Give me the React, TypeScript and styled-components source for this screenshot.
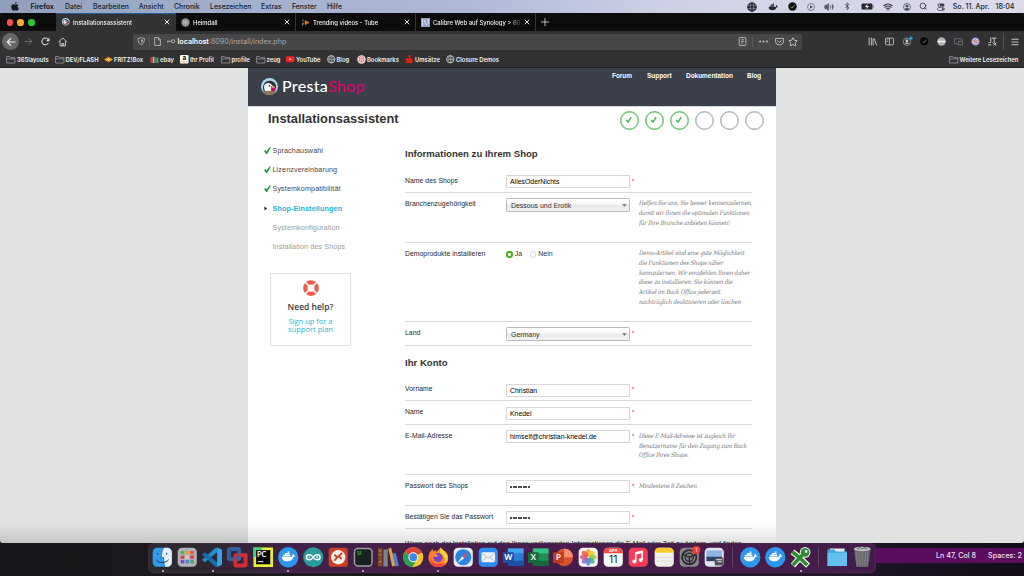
import React from "react";
import styled, { createGlobalStyle } from "styled-components";
import { Search, Wifi, Bluetooth, Star, Volume2 } from "lucide-react";

const Global = createGlobalStyle`
  * { box-sizing: border-box; }
  body { margin: 0; overflow: hidden; background: #151318; }
  svg { display: block; flex: none; overflow: visible; }
`;

const ui = `Inter, "Liberation Sans", sans-serif`;
const body = `"Liberation Sans", Arial, sans-serif`;

const Desktop = styled.div`
  width: 1024px;
  height: 576px;
  display: flex;
  flex-direction: column;
  overflow: hidden;
  font-family: ${ui};
  background: linear-gradient(100deg, #19171b 0%, #1d1b1e 60%, #23182a 80%, #120d18 100%);
`;

const MenuBar = styled.div`
  height: 13px;
  flex: none;
  display: flex;
  align-items: center;
  padding-left: 11px;
  background: linear-gradient(90deg, #919fbd 0%, #a3b0ce 25%, #adb9d6 45%, #c9cde4 62%, #d4d4e8 72%, #dadaeb 100%);
  color: #1b1d25;
`;
const Word = styled.span<{ $w?: number; $size?: number; $bold?: boolean }>`
  width: ${(p) => (p.$w ? `${p.$w}px` : "auto")};
  flex: none;
  white-space: nowrap;
  font-size: ${(p) => p.$size ?? 6.9}px;
  font-weight: ${(p) => (p.$bold ? 700 : 450)};
`;
const Cell = styled.span<{ $w: number }>`
  width: ${(p) => p.$w}px;
  flex: none;
  display: flex;
  align-items: center;
  justify-content: center;
`;
const Grow = styled.span`
  flex: 1;
`;

const Window = styled.div`
  height: 530px;
  flex: none;
  display: flex;
  flex-direction: column;
  border-radius: 4px 4px 3px 3px;
  overflow: hidden;
  background: #323234;
  color: #f2f2f3;
`;
const TabStrip = styled.div`
  height: 18px;
  flex: none;
  display: flex;
  background: #0c0c0d;
`;
const Lights = styled.div`
  width: 56px;
  display: flex;
  align-items: center;
  gap: 4px;
  padding: 1px 0 0 6.7px;
`;
const Light = styled.span<{ $c: string }>`
  width: 6.7px;
  height: 6.7px;
  border-radius: 50%;
  background: ${(p) => p.$c};
`;
const Tab = styled.div<{ $active?: boolean }>`
  width: 120px;
  display: flex;
  align-items: center;
  padding-left: 5px;
  padding-bottom: 1px;
  background: ${(p) => (p.$active ? "#323234" : "#0c0c0d")};
  border-top: 1.5px solid ${(p) => (p.$active ? "#1f5f9e" : "#0c0c0d")};
  border-right: 1px solid ${(p) => (p.$active ? "#323234" : "#343436")};
`;
const TabTitle = styled.span`
  width: 91px;
  flex: none;
  margin-left: 3px;
  overflow: hidden;
  white-space: nowrap;
  font-size: 5.9px;
  font-weight: 500;
  mask-image: linear-gradient(90deg, #000 76px, transparent 90px);
`;

const NavBar = styled.div`
  height: 21px;
  flex: none;
  display: flex;
  align-items: center;
  padding-left: 2px;
`;
const Back = styled.span`
  width: 17px;
  height: 17px;
  border-radius: 50%;
  background: #67676a;
  display: flex;
  align-items: center;
  justify-content: center;
`;
const UrlBar = styled.div`
  width: 669px;
  height: 16px;
  margin-left: 62px;
  border-radius: 2px;
  background: #474749;
  display: flex;
  align-items: center;
`;
const Url = styled.span`
  font-size: 7.1px;
  color: #a9a9ac;
  white-space: nowrap;
  b {
    color: #fff;
    font-weight: 600;
  }
`;
const NavIcons = styled.span`
  display: flex;
  align-items: center;
`;
const Divider = styled.span<{ $h: number; $c: string }>`
  width: 1px;
  height: ${(p) => p.$h}px;
  background: ${(p) => p.$c};
`;
const Bookmarks = styled.div`
  height: 16px;
  flex: none;
  display: flex;
  align-items: center;
  padding-left: 6px;
  border-bottom: 1px solid #1d1d1f;
`;
const Bookmark = styled.span<{ $w: number }>`
  width: ${(p) => p.$w}px;
  flex: none;
  display: flex;
  align-items: center;
  white-space: nowrap;
  font-size: 5.85px;
  font-weight: 600;
  gap: 1.5px;
`;

const Viewport = styled.div`
  flex: 1;
  display: flex;
  justify-content: center;
  background: #e0e3e2;
  overflow: hidden;
`;
const Page = styled.div`
  width: 528px;
  background: #fff;
  font-family: ${body};
  color: #333;
`;
const Header = styled.div`
  height: 38.5px;
  background: #3a3f4a;
  border-bottom: 1px solid #d3d5da;
  display: flex;
  justify-content: space-between;
  padding-left: 13px;
`;
const Brand = styled.div`
  display: flex;
  align-items: center;
  gap: 4px;
  font: 500 16px Lato, sans-serif;
  letter-spacing: 0.3px;
  color: #fff;
  padding-bottom: 1px;
  b {
    font-weight: 500;
    color: #df0067;
  }
`;
const BrandName = styled.span`
  padding-bottom: 2px;
`;
const HeaderNav = styled.div`
  display: flex;
  height: 15px;
  align-items: center;
  font-size: 6.45px;
  font-weight: 700;
  color: #fff;
`;
const NavLink = styled.span<{ $w: number }>`
  width: ${(p) => p.$w}px;
  white-space: nowrap;
`;
const TitleRow = styled.div`
  height: 32px;
  display: flex;
  justify-content: space-between;
  padding: 0 12.5px 0 20px;
`;
const Title = styled.h1`
  margin: 4px 0 0;
  font-size: 12.85px;
  line-height: 15px;
  color: #333;
`;
const Steps = styled.div`
  display: flex;
  gap: 6px;
  padding-top: 4px;
`;
const Step = styled.span<{ $done?: boolean }>`
  width: 19px;
  height: 19px;
  border-radius: 50%;
  border: 1.6px solid ${(p) => (p.$done ? "#5bc063" : "#a9afb8")};
  box-shadow: inset 0 0 0 0.5px ${(p) => (p.$done ? "#5bc063" : "#a9afb8")};
  display: flex;
  align-items: center;
  justify-content: center;
`;
const Columns = styled.div`
  display: flex;
`;
const Sidebar = styled.div`
  width: 157px;
  padding: 2.5px 0 0 16px;
`;
const SideItem = styled.div<{ $state: "done" | "current" | "todo" }>`
  height: 19.2px;
  display: flex;
  align-items: center;
  font-size: 7.2px;
  letter-spacing: ${(p) => (p.$state === "current" ? 0.12 : 0.11)}px;
  white-space: nowrap;
  font-weight: ${(p) => (p.$state === "current" ? 700 : 400)};
  color: ${(p) => ({ done: "#484848", current: "#1fb0d6", todo: "#9b9b9b" })[p.$state]};
`;
const SideMark = styled.span`
  width: 8.5px;
  flex: none;
`;
const Help = styled.div`
  width: 81px;
  height: 73px;
  margin: 16.5px 0 0 6px;
  border: 1px solid #dfe0e2;
  display: flex;
  flex-direction: column;
  align-items: center;
  padding-top: 6.5px;
  font-family: "Open Sans", sans-serif;
`;
const HelpTitle = styled.div`
  margin-top: 4.5px;
  font-size: 8.5px;
  line-height: 12px;
  font-weight: 600;
  color: #363a41;
`;
const HelpLink = styled.div`
  margin-top: 4px;
  font-size: 7.5px;
  line-height: 8.6px;
  text-align: center;
  color: #25b9d7;
`;
const Form = styled.div`
  width: 347px;
`;
const Section = styled.h2<{ $h: number; $top: number }>`
  margin: 0;
  height: ${(p) => p.$h}px;
  padding-top: ${(p) => p.$top}px;
  font-size: 9.6px;
  line-height: 11px;
  color: #333;
`;
const Row = styled.div<{ $h: number }>`
  height: ${(p) => p.$h}px;
  padding-top: 5.5px;
  border-bottom: 1px solid #dadada;
  display: grid;
  grid-template-columns: 101px 125px 8px 1fr;
  align-items: start;
`;
const Label = styled.label`
  padding-top: 1.5px;
  font-size: 6.8px;
  line-height: 8px;
  letter-spacing: 0.06px;
  white-space: nowrap;
  color: #262626;
`;
const Input = styled.div`
  width: 124px;
  height: 13px;
  border: 1px solid #d6d6d6;
  padding: 1px 0 0 3px;
  font-size: 6.9px;
  line-height: 10px;
  color: #000;
`;
const Select = styled.div`
  width: 124px;
  height: 14px;
  border: 1px solid #b9b9b9;
  border-radius: 1.5px;
  padding: 0 2.5px 0 4px;
  display: flex;
  align-items: center;
  justify-content: space-between;
  font-size: 6.95px;
  background: linear-gradient(#fff 20%, #f4f4f4 52%, #e9e9e9 54%, #f3f3f3);
`;
const Required = styled.span`
  padding: 1.5px 0 0 1px;
  font-size: 6px;
  line-height: 8px;
  color: #f00;
`;
const Hint = styled.p`
  margin: 0;
  padding-top: 0.4px;
  width: 116px;
  font: italic 6.2px "DejaVu Serif Condensed", "DejaVu Serif", "Liberation Serif", serif;
  line-height: 9.65px;
  letter-spacing: -0.23px;
  white-space: pre;
  color: #777;
`;
const Radios = styled.div`
  display: flex;
  align-items: center;
  padding-top: 1.5px;
  font-size: 7px;
  line-height: 8px;
`;
const Radio = styled.span<{ $on?: boolean }>`
  width: 6.6px;
  height: 6.6px;
  margin: 1.5px 2.2px 0 0;
  border-radius: 50%;
  border: ${(p) => (p.$on ? "2px solid #45ad16" : "1px solid #d5d5d5")};
  background: #fff;
`;
const Choice = styled.span`
  width: 23.5px;
  display: flex;
  align-items: center;
`;
const Dots = styled.span`
  display: flex;
  align-items: center;
  gap: 0.5px;
  height: 10px;
  i {
    width: 2px;
    height: 2px;
    border-radius: 50%;
    background: #111;
  }
`;
const Cut = styled.div`
  height: 20px;
  padding-top: 11.4px;
  font-size: 6.8px;
  line-height: 8px;
  white-space: nowrap;
  color: #222;
`;
const Fade = styled.div`
  height: 20px;
  margin-top: -20px;
  position: relative;
  flex: none;
  background: linear-gradient(rgba(0, 0, 0, 0), rgba(0, 0, 0, 0.12));
  width: 776px;
`;

const Bottom = styled.div`
  flex: 1;
  display: flex;
  align-items: flex-start;
`;
const Dock = styled.div`
  width: 728px;
  height: 30px;
  margin-left: 148px;
  flex: none;
  border-radius: 6px;
  background: linear-gradient(90deg, #2c2a2f 0%, #2f2732 9%, #432048 22%, #481c4c 60%, #431d49 100%);
  box-shadow: inset 0 0 0 0.5px #4a3450;
  display: flex;
  padding: 4px 0 0 2px;
`;
const DockItem = styled.span`
  width: 25.07px;
  flex: none;
  display: flex;
  flex-direction: column;
  align-items: center;
  gap: 2px;
`;
const Running = styled.i`
  width: 2px;
  height: 2px;
  border-radius: 50%;
  background: #d3c8d6;
`;
const DockRule = styled.span<{ $w: number }>`
  width: ${(p) => p.$w}px;
  height: 22px;
  display: flex;
  justify-content: center;
`;
const StatusBar = styled.div`
  flex: 1;
  height: 15px;
  margin-top: 4.5px;
  background: #590d5c;
  display: flex;
  align-items: center;
  padding-left: 60px;
  color: #ece0ee;
`;

const Svg = ({ s, v = 16, children }: { s: number; v?: number; children: React.ReactNode }) => (
  <svg width={s} height={s} viewBox={`0 0 ${v} ${v}`} fill="none">
    {children}
  </svg>
);

const Apple = () => (
  <svg width="8" height="9" viewBox="0 0 16 18" fill="#15171e">
    <path d="M11.3 0c.1 1.900-1.500 3.900-3.400 3.900C7.600 2.100 9.300.200 11.300 0zM14.800 6.200c-2.700 1.700-2.200 5.200.7 6.400-.8 2.300-2.300 4.900-4 4.900-1.300 0-1.700-.8-3.200-.8s-2 .8-3.200.8C2.800 17.500.5 13.500.5 10c0-3.500 2.200-5.300 4.300-5.300 1.400 0 2.500.9 3.400.9s2.200-1 3.900-1c.9 0 2 .5 2.700 1.600z" />
  </svg>
);
const Globe = ({ s = 9, c = "#ddd", solid = false }) => (
  <Svg s={s}>
    <circle cx="8" cy="8" r="7" stroke={c} strokeWidth="1.4" fill={solid ? c : "none"} />
    {solid ? (
      <path d="M1.500 5.500h13M1.500 10.500h13M5.500 2v12M10.500 2v12" stroke="#9c9cac" strokeWidth=".9" />
    ) : (
      <path d="M1 8h14M8 1v14M8 1C3 4 3 12 8 15M8 1c5 3 5 11 0 14" stroke={c} strokeWidth="1" />
    )}
  </Svg>
);
const Whale = ({ s, c }: { s: number; c: string }) => (
  <Svg s={s}>
    <path d="M1 8h11c.8 0 1-1.200.6-2l1-1.200c.8.500 1 1.200.9 1.900.6-.1 1.100 0 1.500.4-.4 1-1.400 1.200-2.100 1.200-1 3.200-3.200 4.900-6.700 4.900C3.500 13.200 1 11.500 1 8z" fill={c} />
    <path d="M2.500 5.800h8v1.700h-8zM4.500 4h5v1.500h-5zM7.500 2.300h2v1.500h-2z" fill={c} />
  </Svg>
);
const CheckDisc = ({ s = 9, c = "#111" }) => (
  <Svg s={s}>
    <circle cx="8" cy="8" r="7.500" fill={c} />
    <path d="M4.500 8.500l2.500 2.500 5-6" stroke="#999" strokeWidth="1.500" />
  </Svg>
);
const User = ({ s = 8, c = "#444956" }) => (
  <Svg s={s}>
    <circle cx="8" cy="8" r="7" stroke={c} strokeWidth="1.500" />
    <circle cx="8" cy="6.300" r="2.700" fill={c} />
    <path d="M3.500 12.500c1.500-3.500 7.500-3.500 9 0-2 2.300-7 2.300-9 0z" fill={c} />
  </Svg>
);
const Battery = () => (
  <svg width="13" height="7" viewBox="0 0 26 14">
    <rect x="1" y="1" width="22" height="12" rx="2.500" fill="#25262e" />
    <path d="M24.500 5v4" stroke="#555" strokeWidth="1.500" />
    <path d="M13 1.500L7.500 8h4l-1 4.500L16.500 6h-4z" fill="#d8d8e8" />
  </svg>
);
const Toggles = () => (
  <Svg s={8}>
    <rect x="1" y="1" width="14" height="6" rx="3" fill="#3b3d48" />
    <circle cx="4.500" cy="4" r="1.700" fill="#d8d8e8" />
    <rect x="1" y="9" width="14" height="6" rx="3" stroke="#3b3d48" strokeWidth="1.300" />
    <circle cx="11.500" cy="12" r="2" fill="#3b3d48" />
  </Svg>
);
const Close = () => (
  <Svg s={6}>
    <path d="M2 2l12 12M14 2L2 14" stroke="#eee" strokeWidth="2.600" />
  </Svg>
);
const Folder = () => (
  <Svg s={9.5}>
    <path d="M1 13.500V2.500h5l1.500 2H15v9zM1 6.500h14" stroke="#a5a5a7" strokeWidth="1.200" />
  </Svg>
);
const Puffin = ({ s }: { s: number }) => (
  <Svg s={s} v={18}>
    <circle cx="9" cy="9" r="9" fill="#a4dbe8" />
    <path d="M2.500 13C1 8 4 3 9 3c4 0 7 2.500 7 7l-3 5H4z" fill="#2b3138" />
    <path d="M3.500 8C4.500 5.500 7.500 4.500 10 6c2.500 1.300 3 3.500 2 5.500l-2 3H5c-1.500-1.500-2-4-1.500-6.500z" fill="#fff" />
    <circle cx="9" cy="8.300" r="1" fill="#25313b" />
    <path d="M10.500 9c3-1.500 6 .5 4.500 5.500-1-1.500-3-1-4.500-2z" fill="#df0067" />
    <path d="M11 8.500c1.600-.5 3.200 0 3.800 1.500l-3.300.8z" fill="#d9a06c" />
    <path d="M2 14.500c3-1.500 11-1.500 14 0-3 4.500-11 4.500-14 0z" fill="#8d7358" />
  </Svg>
);
const GreenTick = () => (
  <svg width="7" height="7" viewBox="0 0 14 14">
    <path d="M.2 8L3 6l2 3L11.500.3l2.300.5L6.200 13.800H4.200z" fill="#149a35" />
  </svg>
);
const Lifebuoy = () => (
  <Svg s={16} v={32}>
    <circle cx="16" cy="16" r="11.500" stroke="#ee5b49" strokeWidth="8.500" />
    <path d="M5 5l6 6M21 21l6 6M27 5l-6 6M11 21l-6 6" stroke="#fff" strokeWidth="3.500" />
  </Svg>
);
const Arrow = () => (
  <svg width="5" height="3" viewBox="0 0 10 6">
    <path d="M0 0h10L5 6z" fill="#888" />
  </svg>
);

const Ic = ({ children }: { children: React.ReactNode }) => (
  <Svg s={20.5} v={21}>
    {children}
  </Svg>
);
const Sq = ({ f }: { f: string }) => <rect x=".7" y=".7" width="19.600" height="19.600" rx="4.500" fill={f} />;
const Office = ({ l, dark, mid, light, round = false }: { l: string; dark: string; mid: string; light: string; round?: boolean }) => (
  <Ic>
    {round ? (
      <>
        <circle cx="11.500" cy="10.500" r="9" fill={mid} />
        <path d="M11.500 1.500a9 9 0 0 1 9 9h-9z" fill={light} />
      </>
    ) : (
      <>
        <rect x="5" y="1.500" width="16" height="18" rx="1" fill={mid} />
        <path d="M5 1.500h16v5H5z" fill={light} />
        <path d="M5 14h16v5.500H5z" fill={dark} />
      </>
    )}
    <rect x="0" y="5.500" width="11" height="11" rx="1" fill={dark} />
    <text x="5.500" y="13.800" textAnchor="middle" fontSize="8" fontWeight="700" fontFamily="Lato, sans-serif" fill="#fff">{l}</text>
  </Ic>
);
const DockerDock = () => (
  <Ic>
    <circle cx="10.500" cy="10.500" r="10.400" fill="#2d96ee" />
    <g transform="translate(3 2.500) scale(.92)">
      <path d="M1 8h11c.8 0 1-1.200.6-2l1-1.200c.8.500 1 1.200.9 1.900.6-.1 1.100 0 1.500.4-.4 1-1.400 1.200-2.100 1.200-1 3.200-3.200 4.900-6.700 4.900C3.500 13.200 1 11.500 1 8zM2.500 5.800h8v1.700h-8zM4.500 4h5v1.500h-5zM7.500 2.300h2v1.500h-2z" fill="#fff" />
    </g>
  </Ic>
);

const petals = ["#f6a12d", "#e8d12f", "#9cc93f", "#41b58d", "#4d8fd0", "#8d6fc0", "#d25c92", "#ef5b45"];
const padColors = ["#4bbf4b", "#e9a41f", "#ee5540", "#d84343", "#cfcfcf", "#e03838", "#8a49c5", "#3f87e0", "#49b04b"];

const dockLeft: [React.ReactNode, boolean?][] = [
  [
    <Ic key="finder">
      <Sq f="#2f9bee" />
      <path d="M12 .7c-2 3-2.500 7-2.300 10h2.500c-.2 3.500 0 6 1 9.600h2.600a4.500 4.500 0 0 0 4.500-4.500V5.200A4.500 4.500 0 0 0 15.800.7z" fill="#e4eefa" />
      <path d="M6 6v2M15 6v2M4 13c3.500 4 9.500 4 13 0" stroke="#17385f" strokeWidth="1" />
      <path d="M12 .7c-2 3-2.500 7-2.300 10h2.500c-.2 3.500 0 6 1 9.600" stroke="#17385f" strokeWidth=".5" />
    </Ic>,
    true,
  ],
  [
    <Ic key="pad">
      <Sq f="#b3b1b8" />
      {padColors.map((c, i) => (
        <rect key={i} x={3.7 + (i % 3) * 4.9} y={4 + Math.floor(i / 3) * 4.700} width="3.800" height="3.400" rx=".8" fill={c} />
      ))}
    </Ic>,
  ],
  [
    <Ic key="code">
      <path d="M15.500 5.300L3 15.500l-3-2.300L13.500 1l2-.5z" fill="#2489ca" />
      <path d="M15.500 15.700L3 5.500.0 7.800 13.500 20l2 .5z" fill="#1070b3" />
      <path d="M15.500.5l5 2.300v15.400l-5 2.300z" fill="#3ba3ee" />
    </Ic>,
    true,
  ],
  [
    <Ic key="vm">
      <rect x="8.500" y="8.500" width="10.500" height="10.500" rx="1" stroke="#d42e34" strokeWidth="4" />
      <rect x="2" y="2" width="10.500" height="10.500" rx="1" stroke="#315f9f" strokeWidth="4" />
      <path d="M12 8.500h7v4M8.500 12v5" stroke="#d42e34" strokeWidth="3.500" />
    </Ic>,
  ],
  [
    <Ic key="pc">
      <rect x=".5" y=".5" width="20" height="20" fill="#e9ee3f" />
      <path d="M.5.500h10L.5 12z" fill="#37d487" />
      <rect x="3.200" y="3.200" width="14.500" height="14.500" fill="#060606" />
      <text x="4.200" y="10.500" fontSize="7.500" fontWeight="700" fontFamily="Lato, sans-serif" fill="#fff">PC</text>
      <path d="M5 15h5.500" stroke="#fff" strokeWidth="1" />
    </Ic>,
  ],
  [<DockerDock key="d" />, true],
  [
    <Ic key="ard">
      <circle cx="10.500" cy="10.500" r="10.300" fill="#2b9a9c" />
      <path d="M10.500 10.500c-2-3.500-7-3.500-7 0s5 3.500 7 0c2-3.500 7-3.500 7 0s-5 3.500-7 0z" stroke="#fff" strokeWidth="1.500" />
      <path d="M5.500 10.500h2M13.500 10.500h2M14.500 9.500v2" stroke="#fff" strokeWidth=".8" />
    </Ic>,
  ],
  [
    <Ic key="remote">
      <rect x=".7" y=".7" width="19.600" height="19.600" rx="3" fill="#cb3f27" />
      <circle cx="10.500" cy="10.500" r="7.300" fill="#f8efe9" />
      <path d="M6.500 8l3 2.500-3 3.500M14.500 6l-3.500 3.500 3 3" stroke="#c93f2b" strokeWidth="1.900" />
    </Ic>,
  ],
  [
    <Ic key="term">
      <rect x="1.500" y="1.500" width="18" height="18" rx="3.500" fill="#18211f" stroke="#9a9aa0" strokeWidth="1.500" />
      <text x="4" y="8" fontSize="5" fontWeight="700" fontFamily="Liberation Mono, monospace" fill="#2aa53a">$</text>
      <path d="M8 4v4" stroke="#2aa53a" strokeWidth="1" />
    </Ic>,
    true,
  ],
  [
    <Ic key="books">
      <path d="M0 1h4.500v19H0z" fill="#7b4a22" />
      <path d="M5.500 2.500H10V20H5.500z" fill="#7c8488" />
      <path d="M10.500 1.500l3-.8L18 19l-3.500 1z" fill="#d6a548" />
      <path d="M15 7l3-1 3.500 13-3.500 1z" fill="#4b7fe0" />
      <path d="M1 4h2.500M1 8h2.500M1 15h2.500" stroke="#d88a35" strokeWidth="1" />
    </Ic>,
  ],
  [
    <Ic key="chrome">
      <circle cx="10.500" cy="10.500" r="10.300" fill="#f3c62e" />
      <path d="M10.500 10.500L1.600 5.300a10.300 10.300 0 0 1 17.900.2z" fill="#db4437" />
      <path d="M10.500 10.500L1.600 5.300a10.300 10.300 0 0 0 7.900 15.400l4-7z" fill="#2e9e55" />
      <circle cx="10.500" cy="10.500" r="5" fill="#fff" />
      <circle cx="10.500" cy="10.500" r="4" fill="#4385f0" />
    </Ic>,
  ],
  [
    <Ic key="ff">
      <path d="M2 5l2.500-3 1 2.500L8 3l.500 2L13 .5c1 2 3 3 5 4 2 2.500 3.200 5 2.500 9-1 4-5 7-10 7S1 17 .5 12C.3 9 1 7 2 5z" fill="#fb8022" />
      <path d="M13 .5c1 2 6 5 7 8.500.5 4-1 7-3.500 9C19 12 16 8 12 6.500z" fill="#ffd43a" />
      <path d="M2 12c0 5 3.500 8.500 8.500 8.500 3 0 6-1.500 7.500-4-5 2-13 2-16-4.500z" fill="#f43c4e" />
      <circle cx="10.300" cy="10.800" r="4.600" fill="#7b3fd0" />
      <path d="M5 8c2-1 4-.5 5.500 1L8 10.500z" fill="#fb9a2a" />
    </Ic>,
    true,
  ],
  [
    <Ic key="safari">
      <Sq f="#e7e8ec" />
      <circle cx="10.500" cy="10.500" r="8.300" fill="#2a86e2" />
      <path d="M16.500 4.500l-5 7-2-2z" fill="#f04a3c" />
      <path d="M4.500 16.500l5-7 2 2z" fill="#f4f4f4" />
    </Ic>,
  ],
  [
    <Ic key="mail">
      <Sq f="#2f8df2" />
      <rect x="3.500" y="5.500" width="14" height="10" rx="1.500" fill="#eef1f5" />
      <path d="M4 6.500l6.500 5 6.500-5M4 15l4.500-4.500M17 15l-4.500-4.500" stroke="#aab2bd" strokeWidth=".8" />
    </Ic>,
  ],
  [<Office key="w" l="W" dark="#1c4fa8" mid="#2b7cd3" light="#41a5ee" />],
  [<Office key="x" l="X" dark="#15693d" mid="#1f8e52" light="#33c481" />],
  [<Office key="p" l="P" dark="#bd3b20" mid="#d8522f" light="#f98c6b" round />],
  [
    <Ic key="photos">
      <Sq f="#f5f5f5" />
      {petals.map((c, i) => (
        <ellipse key={i} cx="10.500" cy="5.800" rx="2.500" ry="3.800" fill={c} opacity=".88" transform={`rotate(${i * 45} 10.500 10.500)`} />
      ))}
    </Ic>,
  ],
  [
    <Ic key="cal">
      <Sq f="#f7f7f7" />
      <path d="M.7 6.500V5.200A4.500 4.500 0 0 1 5.200.7h10.600a4.500 4.500 0 0 1 4.500 4.500v1.300z" fill="#ed4b42" />
      <text x="10.500" y="5.500" textAnchor="middle" fontSize="4.200" fontWeight="600" fontFamily="Inter, sans-serif" fill="#fff">APR</text>
      <text x="10.500" y="16.800" textAnchor="middle" fontSize="10.500" fontFamily="Inter, sans-serif" fill="#222">11</text>
    </Ic>,
  ],
  [
    <Ic key="music">
      <Sq f="#f93b58" />
      <path d="M8 14.500V6l6.500-1.500V13" stroke="#fff" strokeWidth="1.500" />
      <path d="M8 6.500l6.500-1.500" stroke="#fff" strokeWidth="2.200" />
      <circle cx="6.500" cy="14.800" r="2" fill="#fff" />
      <circle cx="13" cy="13.300" r="2" fill="#fff" />
    </Ic>,
  ],
  [
    <Ic key="notes">
      <Sq f="#f1efe9" />
      <path d="M.7 6V5.200A4.500 4.500 0 0 1 5.200.7h10.600a4.500 4.500 0 0 1 4.500 4.500V6z" fill="#fbca30" />
      <path d="M2 10.500h17M2 14.500h17" stroke="#d9d7d0" strokeWidth=".7" />
    </Ic>,
  ],
  [
    <Ic key="prefs">
      <Sq f="#86868b" />
      <circle cx="10.500" cy="10.500" r="7.300" stroke="#2c2c30" strokeWidth="2" />
      <circle cx="10.500" cy="10.500" r="4.300" fill="#77777c" stroke="#2c2c30" strokeWidth="1.300" />
      <path d="M10.500 10.500L4 7.500M10.500 10.500L17 8M10.500 10.500l.5 7" stroke="#2c2c30" strokeWidth="1.400" />
      <circle cx="17.700" cy="3.200" r="4.200" fill="#f23a33" />
      <text x="17.700" y="5.200" textAnchor="middle" fontSize="5.500" fontFamily="Inter, sans-serif" fill="#fff">1</text>
    </Ic>,
  ],
  [
    <Ic key="preview">
      <Sq f="#dfe4ee" />
      <path d="M2.500 3.500h16v7h-16z" fill="#8fb3e6" />
      <path d="M2.500 10h16v4.500h-16z" fill="#2b426b" />
      <rect x="11" y="11" width="9" height="8" rx="1" fill="#55565c" />
      <path d="M12.500 13h6M14 15h4" stroke="#e8e8e8" strokeWidth="1" />
    </Ic>,
  ],
];
const dockMid: [React.ReactNode, boolean?][] = [
  [<DockerDock key="d1" />],
  [<DockerDock key="d2" />],
  [
    <Ic key="xq">
      <path d="M2.500 5l5 4 4 3.500 7 6.500M3 19l7-8 4-4" stroke="#f1f5e8" strokeWidth="6" />
      <circle cx="15.500" cy="5.500" r="5.500" fill="#f1f5e8" />
      <path d="M2.500 5l5 4 4 3.500 6 6M3 18.500l7-7.500 4-4" stroke="#318a35" strokeWidth="3.600" />
      <circle cx="15.500" cy="5.500" r="4.500" fill="#318a35" />
      <circle cx="16.500" cy="4.500" r="1.300" fill="#fff" />
    </Ic>,
    true,
  ],
];
const dockRight: [React.ReactNode, boolean?][] = [
  [
    <Ic key="folder">
      <path d="M3 1.500h15v5H3z" fill="#e5e8ec" />
      <path d="M.5 2.500h7l1.500 2h11.500v15H.5z" fill="#40a9e2" />
      <path d="M.5 6h20v13.500H.5z" fill="#62bff0" />
    </Ic>,
  ],
  [
    <Ic key="trash">
      <path d="M2 2h17l-2.500 18.500h-12z" fill="#68686d" />
      <path d="M7 5l1 14M10.500 5v14M14 5l-1 14M4.500 5l1 14M16.500 5l-1 14" stroke="#86868b" strokeWidth=".8" />
      <ellipse cx="10.500" cy="2" rx="8.500" ry="2.300" fill="#c0c0c4" />
      <path d="M5 2l3-2 2 2 3-1.500 3 1.500" stroke="#666" strokeWidth="1" />
      <path d="M6 2.500h2M12 1.500h2" stroke="#3bb777" strokeWidth="1" />
    </Ic>,
  ],
];

const DockGroup = ({ items }: { items: [React.ReactNode, boolean?][] }) => (
  <>
    {items.map(([icon, running], i) => (
      <DockItem key={i}>
        {icon}
        {running && <Running />}
      </DockItem>
    ))}
  </>
);

const menus: [string, number][] = [
  ["Datei", 28], ["Bearbeiten", 45.7], ["Ansicht", 35.3], ["Chronik", 36], ["Lesezeichen", 51], ["Extras", 31], ["Fenster", 35], ["Hilfe", 20],
];

const Field = ({ label, h, hint, req, children }: { label: string; h: number; hint?: string; req?: boolean; children: React.ReactNode }) => (
  <Row $h={h}>
    <Label>{label}</Label>
    {children}
    <Required>{req ? "*" : ""}</Required>
    <Hint>{hint}</Hint>
  </Row>
);
const Password = () => (
  <Input>
    <Dots>{Array.from({ length: 8 }, (_, i) => <i key={i} />)}</Dots>
  </Input>
);

export default function App() {
  return (
    <Desktop>
      <Global />
      <MenuBar>
        <Word $w={19.5}><Apple /></Word>
        <Word $w={34.500} $bold>Firefox</Word>
        {menus.map(([t, w]) => <Word key={t} $w={w}>{t}</Word>)}
        <Grow />
        <Cell $w={20}><Globe s={10} c="#2a2b33" solid /></Cell>
        <Cell $w={21}><Whale s={10} c="#2a2b33" /></Cell>
        <Cell $w={19}><CheckDisc s={9} /></Cell>
        <Cell $w={18}>
          <Svg s={8}><circle cx="8" cy="8" r="7" stroke="#5b5d6a" strokeWidth="1.400" /><path d="M6 4.500v7l5.500-3.500z" fill="#444653" /></Svg>
        </Cell>
        <Cell $w={18}><Volume2 size={10} color="#555866" fill="#555866" strokeWidth={2} /></Cell>
        <Cell $w={19}><Bluetooth size={8.5} color="#4a4c58" strokeWidth={2.4} /></Cell>
        <Cell $w={20}><Battery /></Cell>
        <Cell $w={22}><Wifi size={10} color="#3b3d48" strokeWidth={3} /></Cell>
        <Cell $w={15}><User /></Cell>
        <Cell $w={19}><Search size={8.5} color="#3b3d48" strokeWidth={2.5} /></Cell>
        <Cell $w={16}><Toggles /></Cell>
        <Word $w={46.500} $size={7.1}>&nbsp;&nbsp;So. 11. Apr.</Word>
        <Word $w={28.500} $size={7.2}>18:04</Word>
      </MenuBar>

      <Window>
        <TabStrip>
          <Lights><Light $c="#fb4f4a" /><Light $c="#fbac2c" /><Light $c="#2ac33c" /></Lights>
          <Tab $active>
            <Cell $w={9}><Puffin s={7.5} /></Cell>
            <TabTitle>Installationsassistent</TabTitle>
            <Close />
          </Tab>
          <Tab>
            <Cell $w={9}>
              <Svg s={9}><circle cx="8" cy="8" r="7.500" fill="#8d8d8f" /><path d="M5 4v7M11 4v7M5 7.500h6M8 3v11" stroke="#c5c5c6" strokeWidth="1.300" /></Svg>
            </Cell>
            <TabTitle>Heimdall</TabTitle>
            <Close />
          </Tab>
          <Tab>
            <Cell $w={9}>
              <Svg s={9}><path d="M2 1l5 3.500-5 3z" fill="#444" /><path d="M2 9l5-1-5 7z" fill="#777" /><path d="M7 3.500l8 4.500-8 5z" fill="#f1680d" /></Svg>
            </Cell>
            <TabTitle>Trending videos - Tube</TabTitle>
            <Close />
          </Tab>
          <Tab>
            <Cell $w={9}>
              <Svg s={9}><rect width="16" height="16" fill="#8fa0cc" /><path d="M3 2v12M8 3l-2 4 5 6M13 2v9" stroke="#e7eaf6" strokeWidth="1.700" /></Svg>
            </Cell>
            <TabTitle>Calibre Web auf Synology &gt; 60</TabTitle>
            <Close />
          </Tab>
          <Cell $w={18}><Svg s={8}><path d="M8 0v16M0 8h16" stroke="#ddd" strokeWidth="1.600" /></Svg></Cell>
        </TabStrip>

        <NavBar>
          <Back><Svg s={10}><path d="M15 8H2M8 2L2 8l6 6" stroke="#eee" strokeWidth="1.800" /></Svg></Back>
          <Cell $w={18}><Svg s={9}><path d="M1 8h13M8 2l6 6-6 6" stroke="#777" strokeWidth="1.600" /></Svg></Cell>
          <Cell $w={17}><Svg s={9}><path d="M13 10.500A6 6 0 1 1 12.500 4.500" stroke="#ddd" strokeWidth="1.800" /><path d="M15 1v6.500H9z" fill="#ddd" /></Svg></Cell>
          <Cell $w={17}><Svg s={9.5}><path d="M1 8.500L8 1.500l7 7M3.500 7.500V15h9V7.500M6.500 15v-4h3v4" stroke="#ddd" strokeWidth="1.500" /></Svg></Cell>
          <UrlBar>
            <Cell $w={16}><Svg s={8.5}><path d="M8 1.500l6 1.200c.2 5-1 9.500-6 12-5-2.500-6.200-7-6-12z" stroke="#ccc" strokeWidth="1.400" /><path d="M8 4.500l3.200.7c0 3-1 5-3.200 6.300z" fill="#bbb" /></Svg></Cell>
            <Divider $h={11} $c="#59595b" />
            <Cell $w={14}><Svg s={9}><path d="M3 1h6.500L13 4.500V15H3zM9.500 1v4H13" stroke="#ccc" strokeWidth="1.400" /></Svg></Cell>
            <Cell $w={13.500}><Svg s={8.5}><path d="M0 8h8M1.500 8v2.500" stroke="#ccc" strokeWidth="1.500" /><circle cx="11.500" cy="8" r="3" stroke="#ccc" strokeWidth="1.500" /></Svg></Cell>
            <Url><b>localhost</b>:8090/install/index.php</Url>
            <Grow />
            <NavIcons>
              <Cell $w={20}><Svg s={9}><rect x="2" y="1" width="12" height="14" rx="1.500" stroke="#ccc" strokeWidth="1.400" /><path d="M5 5h6M5 8h6M5 11h4" stroke="#ccc" strokeWidth="1.200" /></Svg></Cell>
              <Divider $h={11} $c="#59595b" />
              <Cell $w={21}><Svg s={9}><circle cx="2" cy="8" r="1.700" fill="#ccc" /><circle cx="8" cy="8" r="1.700" fill="#ccc" /><circle cx="14" cy="8" r="1.700" fill="#ccc" /></Svg></Cell>
              <Cell $w={10}><Svg s={9}><path d="M1 2.500h14V8c0 8-14 8-14 0zM4.500 6.500L8 9.700l3.500-3.200" stroke="#ccc" strokeWidth="1.500" /></Svg></Cell>
              <Cell $w={18}><Star size={10} color="#ddd" strokeWidth={2} /></Cell>
            </NavIcons>
          </UrlBar>
          <Grow />
          <NavIcons>
            <Cell $w={17}><Svg s={9}><path d="M2 1v14M6 1v14M9 3v12M10.500 2l5 13" stroke="#ccc" strokeWidth="1.600" /></Svg></Cell>
            <Cell $w={17}><Svg s={9}><rect x="1" y="2" width="14" height="12" rx="1.500" stroke="#ccc" strokeWidth="1.500" /><path d="M8 2v12M3 5h3M3 8h3" stroke="#ccc" strokeWidth="1.300" /></Svg></Cell>
            <Cell $w={18}><Svg s={9}><circle cx="7" cy="8.500" r="6.500" stroke="#aaa" strokeWidth="1.300" /><circle cx="7" cy="7" r="2.500" fill="#ccc" /><path d="M3 12c1-3 7-3 8 0z" fill="#ccc" /><circle cx="14" cy="2" r="3" fill="#10a8ee" /></Svg></Cell>
            <Cell $w={17}><CheckDisc s={8.5} c="#060606" /></Cell>
            <Cell $w={17}><Svg s={9}><circle cx="8" cy="8" r="7.500" fill="#b4b4b4" /><path d="M1 8h14" stroke="#eee" strokeWidth="3" /></Svg></Cell>
            <Cell $w={17}><Svg s={9}><path d="M7 12H1V3h13v4" stroke="#777" strokeWidth="1.400" /><rect x="8" y="8" width="7" height="6" stroke="#777" strokeWidth="1.400" /></Svg></Cell>
            <Cell $w={17}><Svg s={9}><circle cx="8" cy="8" r="6.800" fill="#e8e9f1" stroke="#4868b0" strokeWidth="2" /><circle cx="8" cy="8" r="3.200" stroke="#cc3434" strokeWidth="1.400" /><path d="M5.500 5.500l5 5" stroke="#cc3434" strokeWidth="1.400" /></Svg></Cell>
            <Cell $w={17}><Svg s={9}><path d="M5 1v7c0 3-3 3-4 1M7 2h8M11 2v9M0 14h6M8 10l7 5M15 10l-5 5" stroke="#e5e5e5" strokeWidth="1.500" /></Svg></Cell>
            <Cell $w={4}><Divider $h={17} $c="#515153" /></Cell>
            <Cell $w={19}><Svg s={8}><path d="M1 2.500h14M1 8h14M1 13.500h14" stroke="#ddd" strokeWidth="1.700" /></Svg></Cell>
          </NavIcons>
        </NavBar>

        <Bookmarks>
          <Bookmark $w={48.500}><Folder />365layouts</Bookmark>
          <Bookmark $w={49}><Folder />DEV/FLASH</Bookmark>
          <Bookmark $w={46}><Svg s={9}><path d="M0 8l8-5 8 5-8 5z" fill="#e9b31d" /><path d="M4 6l4-4 4 4-4 8z" fill="#dc3b2a" opacity=".8" /><circle cx="8" cy="8" r="2.500" fill="#f6dd38" /></Svg>FRITZ!Box</Bookmark>
          <Bookmark $w={30.500}><Svg s={9}><path d="M1 4h4v10H1z" fill="#dd3636" /><path d="M5 3h3v11H5z" fill="#e8b925" /><path d="M8 4h3.500v10H8z" fill="#3576d2" /><path d="M11.500 5H15v9h-3.500z" fill="#62a632" /></Svg>ebay</Bookmark>
          <Bookmark $w={40.500}><Svg s={8.5}><rect width="16" height="16" rx="2" fill="#fff" /><text x="8" y="9.500" textAnchor="middle" fontSize="12" fontWeight="700" fontFamily="Inter, sans-serif" fill="#111">a</text><path d="M2.500 11.500c3 2.500 8 2.500 11 0" stroke="#f39a1d" strokeWidth="1.600" /></Svg>Ihr Profil</Bookmark>
          <Bookmark $w={35}><Folder />profile</Bookmark>
          <Bookmark $w={30.500}><Folder />zeug</Bookmark>
          <Bookmark $w={40.500}><Svg s={8.5}><rect y="2.500" width="16" height="11" rx="3" fill="#f22" /><path d="M6.300 5.500v5l4.200-2.500z" fill="#fff" /></Svg>YouTube</Bookmark>
          <Bookmark $w={30}><Globe s={8.5} />Blog</Bookmark>
          <Bookmark $w={48.500}><Svg s={9}><circle cx="8" cy="8" r="7.500" fill="#f3e6e4" /><rect x="4" y="3.500" width="8" height="8.500" rx="2" stroke="#e85a50" strokeWidth="1.500" /><path d="M5 7h6M6.500 9.500h3" stroke="#e85a50" strokeWidth="1.400" /></Svg>Bookmarks</Bookmark>
          <Bookmark $w={41}><Svg s={8.5}><circle cx="8.500" cy="2.500" r="2.300" fill="#e3200d" /><path d="M2 6h12v9H2z" fill="#e3200d" /></Svg>Umsätze</Bookmark>
          <Bookmark $w={60}><Globe s={8.5} />Closure Demos</Bookmark>
          <Grow />
          <Bookmark $w={75.500}><Folder />Weitere Lesezeichen</Bookmark>
        </Bookmarks>

        <Viewport>
          <Page>
            <Header>
              <Brand><Puffin s={17} /><BrandName>Presta<b>Shop</b></BrandName></Brand>
              <HeaderNav>
                <NavLink $w={35}>Forum</NavLink>
                <NavLink $w={39}>Support</NavLink>
                <NavLink $w={61}>Dokumentation</NavLink>
                <NavLink $w={29}>Blog</NavLink>
              </HeaderNav>
            </Header>
            <TitleRow>
              <Title>Installationsassistent</Title>
              <Steps>
                {[1, 1, 1, 0, 0, 0].map((d, i) => (
                  <Step key={i} $done={!!d}>
                    {!!d && <Svg s={7.5}><path d="M2.500 8.500l4 4.500L13 2.500" stroke="#3fb54a" strokeWidth="3" /></Svg>}
                  </Step>
                ))}
              </Steps>
            </TitleRow>
            <Columns>
              <Sidebar>
                {["Sprachauswahl", "Lizenzvereinbarung", "Systemkompatibilität"].map((t) => (
                  <SideItem key={t} $state="done"><SideMark><GreenTick /></SideMark>{t}</SideItem>
                ))}
                <SideItem $state="current">
                  <SideMark><svg width="5" height="5" viewBox="2 0 10 10"><path d="M3 1l5 4-5 4z" fill="#111" /></svg></SideMark>
                  Shop-Einstellungen
                </SideItem>
                {["Systemkonfiguration", "Installation des Shops"].map((t) => (
                  <SideItem key={t} $state="todo"><SideMark />{t}</SideItem>
                ))}
                <Help>
                  <Lifebuoy />
                  <HelpTitle>Need help?</HelpTitle>
                  <HelpLink>Sign up for a<br />support plan</HelpLink>
                </Help>
              </Sidebar>
              <Form>
                <Section $h={31} $top={9.300}>Informationen zu Ihrem Shop</Section>
                <Field label="Name des Shops" h={23} req><Input>AllesOderNichts</Input></Field>
                <Field label="Branchenzugehörigkeit" h={50} hint={"Helfen Sie uns, Sie besser kennenzulernen,\ndamit wir Ihnen die optimalen Funktionen\nfür Ihre Branche anbieten können!"}>
                  <Select>Dessous und Erotik<Arrow /></Select>
                </Field>
                <Field label="Demoprodukte installieren" h={79} hint={"Demo-Artikel sind eine gute Möglichkeit\ndie Funktionen des Shops näher\nkennzulernen. Wir empfehlen Ihnen daher\ndiese zu installieren. Sie können die\nArtikel im Back Office jederzeit\nnachträglich deaktivieren oder löschen"}>
                  <Radios><Choice><Radio $on />Ja</Choice><Choice><Radio />Nein</Choice></Radios>
                </Field>
                <Field label="Land" h={24} req><Select>Germany<Arrow /></Select></Field>
                <Section $h={32.500} $top={11.300}>Ihr Konto</Section>
                <Field label="Vorname" h={23.300} req><Input>Christian</Input></Field>
                <Field label="Name" h={23.700} req><Input>Knedel</Input></Field>
                <Field label="E-Mail-Adresse" h={50} req hint={"Diese E-Mail-Adresse ist zugleich Ihr\nBenutzername für den Zugang zum Back\nOffice Ihres Shops."}>
                  <Input>himself@christian-knedel.de</Input>
                </Field>
                <Field label="Passwort des Shops" h={31} req hint="Mindestens 8 Zeichen"><Password /></Field>
                <Field label="Bestätigen Sie das Passwort" h={23} req><Password /></Field>
                <Cut>Wenn nach der Installation auf den Ihnen vorliegenden Informationen die E-Mail oder Zeit zu ändern, und finden</Cut>
              </Form>
            </Columns>
          </Page>
        </Viewport>
        <Fade />
      </Window>

      <Bottom>
        <Dock>
          <DockGroup items={dockLeft} />
          <DockRule $w={11.500}><Divider $h={20} $c="#5f4468" /></DockRule>
          <DockGroup items={dockMid} />
          <DockRule $w={11.500}><Divider $h={20} $c="#5f4468" /></DockRule>
          <DockGroup items={dockRight} />
        </Dock>
        <StatusBar>
          <Word $w={52} $size={7.2}>Ln 47, Col 8</Word>
          <Word $size={7.2}>Spaces: 2</Word>
        </StatusBar>
      </Bottom>
    </Desktop>
  );
}
